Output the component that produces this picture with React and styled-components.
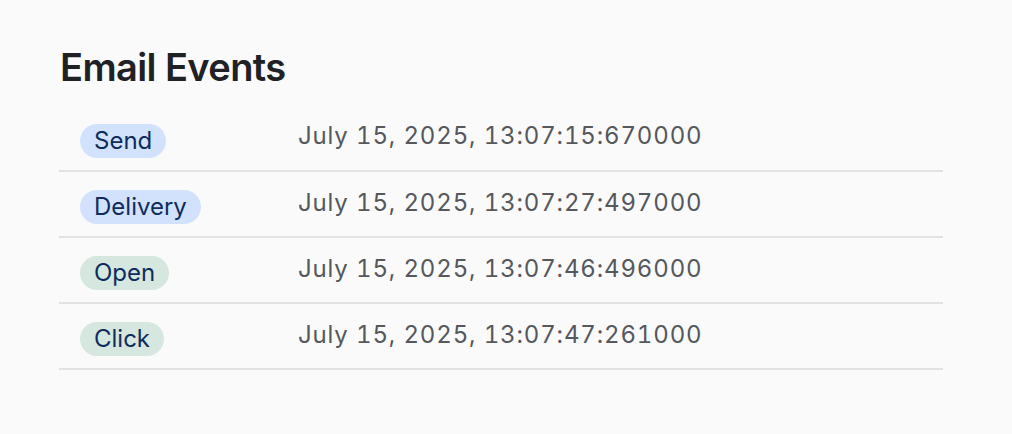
import React from "react";
import styled, { createGlobalStyle } from "styled-components";

const Global = createGlobalStyle`
  html, body { margin: 0; padding: 0; background: #fafafa; }
  body {
    font-family: Inter, "Noto Sans", sans-serif;
  }
`;

const Page = styled.div`
  padding: 45px 0 0 59px;
`;

const Title = styled.h2`
  margin: 0 0 16px 1px;
  font-size: 38px;
  font-weight: 600;
  line-height: 44px;
  letter-spacing: -0.6px;
  color: #202124;
`;

const Table = styled.table`
  width: 884px;
  border-collapse: collapse;
`;

const Row = styled.tr`
  height: 66px;
  border-bottom: 2px solid #e1e2e4;
`;

const TypeCell = styled.td`
  width: 218px;
  padding: 0 0 0 21px;
  vertical-align: middle;
  font-size: 0;
  line-height: 0;
`;

const DateCell = styled.td`
  padding: 0 0 4px 0;
  font-size: 24px;
  letter-spacing: 0.85px;
  font-variant-numeric: tabular-nums;
  color: #55585d;
  vertical-align: middle;
`;

const Badge = styled.span`
  display: inline-block;
  margin-top: 6px;
  padding: 4px 14px 4px 14px;
  border-radius: 17px;
  font-size: 24px;
  line-height: 26px;
  color: #0e2c5e;
  background: ${(p) => (p.$tone === "green" ? "#d5e7de" : "#d3e2fc")};
`;

const events = [
  { type: "Send", tone: "blue", date: "July 15, 2025, 13:07:15:670000" },
  { type: "Delivery", tone: "blue", date: "July 15, 2025, 13:07:27:497000" },
  { type: "Open", tone: "green", date: "July 15, 2025, 13:07:46:496000" },
  { type: "Click", tone: "green", date: "July 15, 2025, 13:07:47:261000" },
];

export default function App() {
  return (
    <>
      <Global />
      <Page>
        <Title>Email Events</Title>
        <Table>
          <tbody>
            {events.map((e) => (
              <Row key={e.type}>
                <TypeCell>
                  <Badge $tone={e.tone}>{e.type}</Badge>
                </TypeCell>
                <DateCell>{e.date}</DateCell>
              </Row>
            ))}
          </tbody>
        </Table>
      </Page>
    </>
  );
}
